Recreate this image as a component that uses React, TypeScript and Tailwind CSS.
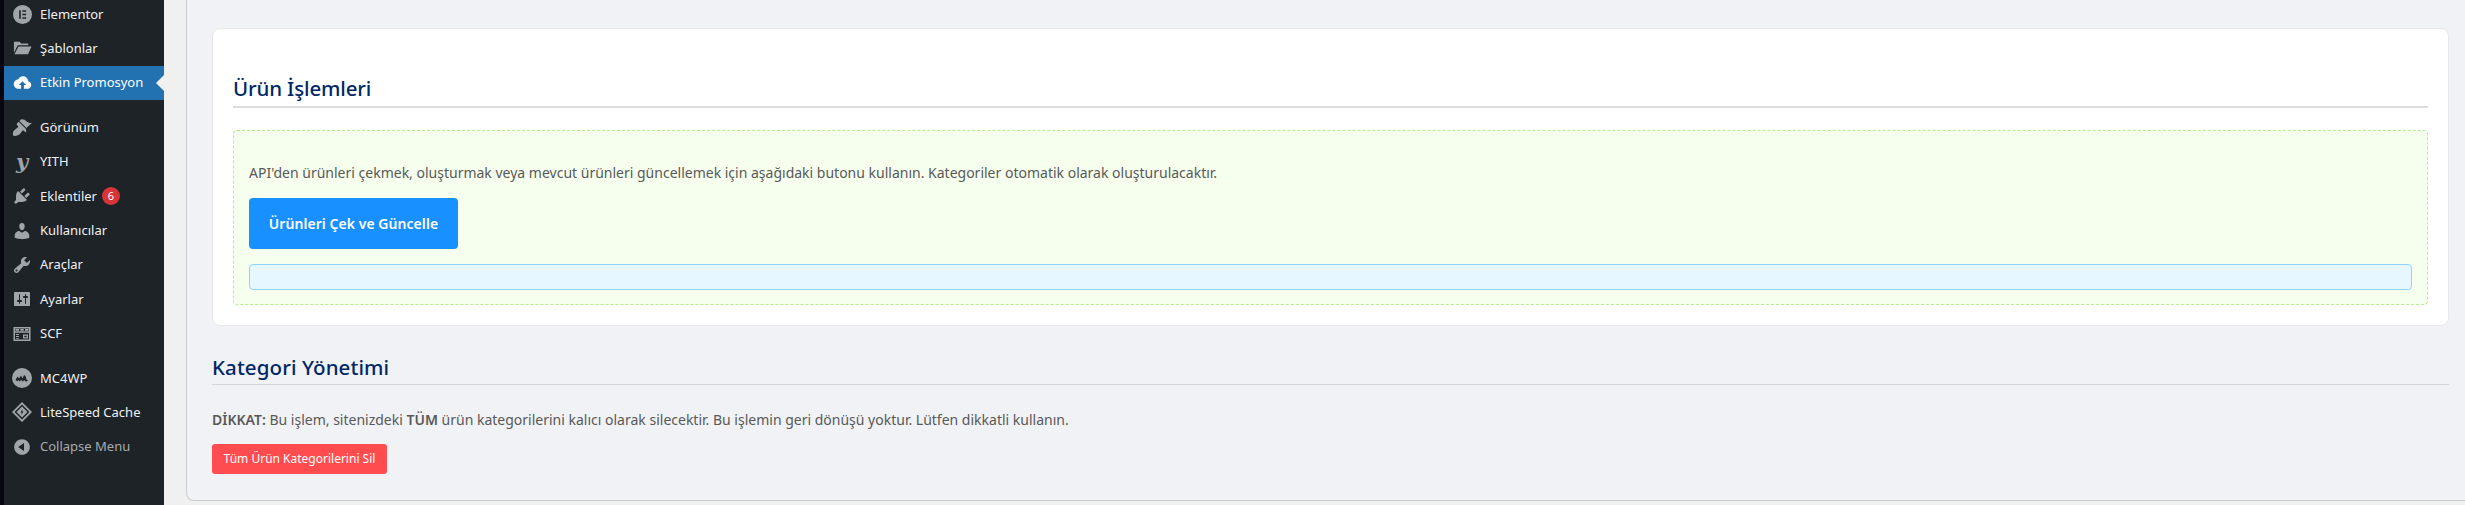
import React from 'react';

const Dash: React.FC<{ d: string }> = ({ d }) => (
  <svg viewBox="0 0 20 20" className="w-5 h-5 fill-[#a0a5aa]" fillRule="evenodd">
    <path d={d} />
  </svg>
);

const ElementorIcon = () => (
  <svg viewBox="0 0 20 20" className="w-[19px] h-[19px] fill-[#a0a5aa]" fillRule="evenodd">
    <path d="M10 0a10 10 0 1 0 0 20 10 10 0 0 0 0-20zM6.5 5.5h1.7v9H6.500zM9.800 5.500h4v1.700h-4zM9.800 9.150h4v1.700h-4zM9.800 12.800h4v1.700h-4z" />
  </svg>
);

const FolderIcon = () => (
  <svg viewBox="0 0 20 20" className="w-[19px] h-[19px] fill-[#a0a5aa]">
    <path d="M1 3h6l1.500 1.800H16v1.700H5L1 14.500zM5.800 7.800H19.500L15.800 16H1.500z" />
  </svg>
);

const CloudIcon = () => (
  <svg viewBox="0 0 20 20" className="w-[19px] h-[19px] fill-white" fillRule="evenodd">
    <path d="M16 8.600C15.700 5.900 13.500 3.500 10.600 3.500c-2.200 0-4 1.200-4.900 3C2.900 6.700.8 8.900.8 11.700c0 2.900 2.300 5 5 5h2.700v-4H6.200L10 8.600l3.800 4.100h-2.300v4h3.300c2.400 0 4.400-1.900 4.400-4.200 0-2-1.300-3.600-3.200-3.900z" />
  </svg>
);

const ScfIcon = () => (
  <svg viewBox="0 0 20 20" className="w-5 h-5 fill-[#a0a5aa]" fillRule="evenodd">
    <path d="M1.500 3h17v14h-17zM3 4.500v2.800h14V4.500zM3.500 5h3.500v1.800H3.500zM3 8.800V15.500h14V8.800zM8.300 5h3.500v1.800H8.300zM13 5h3.500v1.800H13zM4 10h3v1H4zM4 12h3v1H4zM4 14h3v.8H4zM11 10.500h5v4h-5zM12.300 11.800v1.400h2.400v-1.400z" />
  </svg>
);

const Mc4wpIcon = () => (
  <svg viewBox="0 0 20 20" className="w-5 h-5 fill-[#a0a5aa]" fillRule="evenodd">
    <path d="M10 0a10 10 0 1 0 0 20 10 10 0 0 0 0-20zM3.500 12l2-3.500 1.500 2 2-3 1.500 3 1.500-3.500 1.500 1 1 3.500 1.500 1-2 1.200-2-1.800-1 1.800-2-2-1.200 2-1.500-1.800-1 1.400z" />
  </svg>
);

const LiteSpeedIcon = () => (
  <svg viewBox="0 0 20 20" className="w-5 h-5 fill-[#a0a5aa]" fillRule="evenodd">
    <path d="M10 0l10 10-10 10L0 10zM10 2.500L2.500 10l7.500 7.500 7.500-7.500zM10 4.500l5.500 5.500-5.500 5.500L4.500 10zM10.500 7L8.500 10.500h1.300L9.300 13l2.200-3.500h-1.300z" />
  </svg>
);

const icons = {
  appearance: 'M14.48 11.06L7.41 3.99l1.5-1.5c.5-.56 2.3-.47 3.51.32 1.21.8 1.43 1.28 2.91 2.1 1.18.64 2.45 1.26 4.67.86l-5.52 5.29zm-.71.71L6.7 4.7 4.93 6.47c-.39.39-.39 1.02 0 1.41l1.06 1.06c.39.39.39 1.03 0 1.42-.6.6-1.43 1.11-2.21 1.69-.35.26-.7.53-1.01.84C1.43 13.23.1 17.1 1.4 18.4c1.3 1.3 5.17-.03 6.51-1.37.31-.31.58-.66.84-1.01.58-.78 1.09-1.61 1.69-2.21.39-.39 1.03-.39 1.42 0l1.06 1.06c.39.39 1.02.39 1.41 0z',
  plugin: 'M13.11 4.36L9.87 7.6 8 5.73l3.24-3.24c.35-.34 1.05-.2 1.56.32.52.51.66 1.21.31 1.55zm-8 1.77l.91-1.12 9.01 9.01-1.19.84c-.71.71-2.63 1.16-3.82 1.16H6.14L4.9 17.26c-.59.59-1.54.59-2.12 0-.59-.58-.59-1.53 0-2.12l1.24-1.24v-3.88c0-1.13.4-3.19 1.09-3.89zm7.26 3.97l3.24-3.24c.34-.35 1.04-.21 1.55.31.52.51.66 1.21.31 1.55l-3.24 3.25z',
  users: 'M10 9.25c-2.27 0-2.73-3.44-2.73-3.44C7 4.02 7.82 2 9.97 2c2.16 0 2.98 2.02 2.71 3.81 0 0-.41 3.44-2.68 3.44zm0 2.57L12.72 10c2.39 0 4.52 2.33 4.52 4.53v2.49s-3.65 1.13-7.24 1.13c-3.65 0-7.24-1.13-7.24-1.13v-2.49c0-2.25 1.94-4.48 4.47-4.48z',
  tools: 'M16.68 9.77c-1.34 1.34-3.3 1.67-4.95.99l-5.41 6.52c-.99.99-2.59.99-3.58 0s-.99-2.59 0-3.57l6.52-5.42c-.68-1.65-.35-3.61.99-4.95 1.28-1.28 3.12-1.62 4.72-1.06l-2.89 2.89 2.82 2.82 2.86-2.87c.53 1.58.18 3.39-1.08 4.65zM3.81 16.21c.4.39 1.04.39 1.43 0 .4-.4.4-1.04 0-1.43-.39-.4-1.03-.4-1.43 0-.39.39-.39 1.03 0 1.43z',
  settings: 'M18 16V4c0-.55-.45-1-1-1H3c-.55 0-1 .45-1 1v12c0 .55.45 1 1 1h14c.55 0 1-.45 1-1zM8 11h1c.55 0 1 .45 1 1s-.45 1-1 1H8v1.500c0 .28-.22.5-.5.5s-.5-.22-.5-.5V13H6c-.55 0-1-.45-1-1s.45-1 1-1h1V5.500c0-.28.22-.5.5-.5s.5.22.5.5V11zm5-2h-1c-.55 0-1-.45-1-1s.45-1 1-1h1V5.500c0-.28.22-.5.5-.5s.5.22.5.5V7h1c.55 0 1 .45 1 1s-.45 1-1 1h-1v5.500c0 .28-.22.5-.5.5s-.5-.22-.5-.5V9z',
  collapse: 'M10 2.160c4.330 0 7.840 3.510 7.840 7.840s-3.510 7.840-7.840 7.840S2.160 14.330 2.160 10 5.710 2.160 10 2.160zm2 11.720V6.120L6.180 9.970z',
};

const MenuItem: React.FC<{ icon: React.ReactNode; label: string; active?: boolean; badge?: string; muted?: boolean }> = ({
  icon,
  label,
  active,
  badge,
  muted,
}) => (
  <div className={`relative flex items-center h-[34.400px] pl-[8px] ${active ? 'bg-[#2271b1] text-white' : muted ? 'text-[#a7aaad]' : 'text-[#f0f0f1]'}`}>
    <span className="w-[20px] h-5 flex items-center justify-center shrink-0">{icon}</span>
    <span className="ml-[8px] text-[13px] leading-none">{label}</span>
    {badge && (
      <span className="ml-[5px] w-[18px] h-[18px] rounded-full bg-[#d63638] text-white text-[11px] flex items-center justify-center">{badge}</span>
    )}
    {active && <span className="absolute right-0 top-1/2 -translate-y-1/2 border-y-[8px] border-y-transparent border-r-[8px] border-r-[#f0f0f1]" />}
  </div>
);

export default function App() {
  return (
    <div className="flex h-[505px] w-[2465px] overflow-hidden bg-[#f0f0f1] font-['Noto_Sans',sans-serif]">
      <div className="w-[4px] bg-[#05060f] shrink-0" />
      <aside className="w-[160px] shrink-0 bg-[#1d2327] -mt-[3px]">
        <MenuItem icon={<ElementorIcon />} label="Elementor" />
        <MenuItem icon={<FolderIcon />} label="Şablonlar" />
        <MenuItem active icon={<CloudIcon />} label="Etkin Promosyon" />
        <div className="h-[10px]" />
        <MenuItem icon={<Dash d={icons.appearance} />} label="Görünüm" />
        <MenuItem icon={<span className="text-[#a0a5aa] text-[21px] leading-none italic font-bold font-['DejaVu_Serif',serif]">y</span>} label="YITH" />
        <MenuItem icon={<Dash d={icons.plugin} />} label="Eklentiler" badge="6" />
        <MenuItem icon={<Dash d={icons.users} />} label="Kullanıcılar" />
        <MenuItem icon={<Dash d={icons.tools} />} label="Araçlar" />
        <MenuItem icon={<Dash d={icons.settings} />} label="Ayarlar" />
        <MenuItem icon={<ScfIcon />} label="SCF" />
        <div className="h-[10px]" />
        <MenuItem icon={<Mc4wpIcon />} label="MC4WP" />
        <MenuItem icon={<LiteSpeedIcon />} label="LiteSpeed Cache" />
        <MenuItem muted icon={<Dash d={icons.collapse} />} label="Collapse Menu" />
      </aside>

      <main className="flex-1 pl-[22px] h-[501px]">
        <div className="h-full bg-[#f0f2f5] border-l border-b border-[#c9cbcf] rounded-bl-[8px] pl-[25px] pr-[16px] pt-[28px] text-[#595959]">
          <section className="bg-white border border-[#e8e8e8] rounded-[8px] h-[298px] px-[20px] pt-[38px]">
            <h2 className="text-[20.500px] leading-[42px] font-medium text-[#002766] tracking-[-0.15px] border-b-2 border-[#dcdcde] h-[41px]">Ürün İşlemleri</h2>
            <div className="mt-[22px] h-[175px] border border-dashed border-[#b7eb8f] rounded-[4px] bg-[#f6ffed] px-[15px] pt-[32px]">
              <p className="text-[14px] leading-[20px]">
                API'den ürünleri çekmek, oluşturmak veya mevcut ürünleri güncellemek için aşağıdaki butonu kullanın. Kategoriler otomatik olarak oluşturulacaktır.
              </p>
              <button className="mt-[15px] h-[51px] w-[209px] rounded-[4px] bg-[#1890ff] text-white text-[14px] font-semibold tracking-[0.05px]">
                Ürünleri Çek ve Güncelle
              </button>
              <div className="mt-[15px] h-[26px] rounded-[4px] border border-[#91d5ff] bg-[#e6f7ff]" />
            </div>
          </section>

          <h2 className="mt-[24px] text-[20.500px] leading-[34px] font-medium text-[#002766] tracking-[0.1px] border-b border-[#d5d6d9] h-[35px]">Kategori Yönetimi</h2>
          <p className="mt-[25px] text-[14px] leading-[20px]">
            <strong className="font-semibold">DİKKAT:</strong> Bu işlem, sitenizdeki <strong className="font-semibold">TÜM</strong> ürün kategorilerini kalıcı olarak silecektir. Bu işlemin geri dönüşü yoktur. Lütfen dikkatli kullanın.
          </p>
          <button className="mt-[14px] h-[30px] w-[175px] rounded-[3px] bg-[#ff4d4f] text-white text-[12px]">
            Tüm Ürün Kategorilerini Sil
          </button>
        </div>
      </main>
    </div>
  );
}
